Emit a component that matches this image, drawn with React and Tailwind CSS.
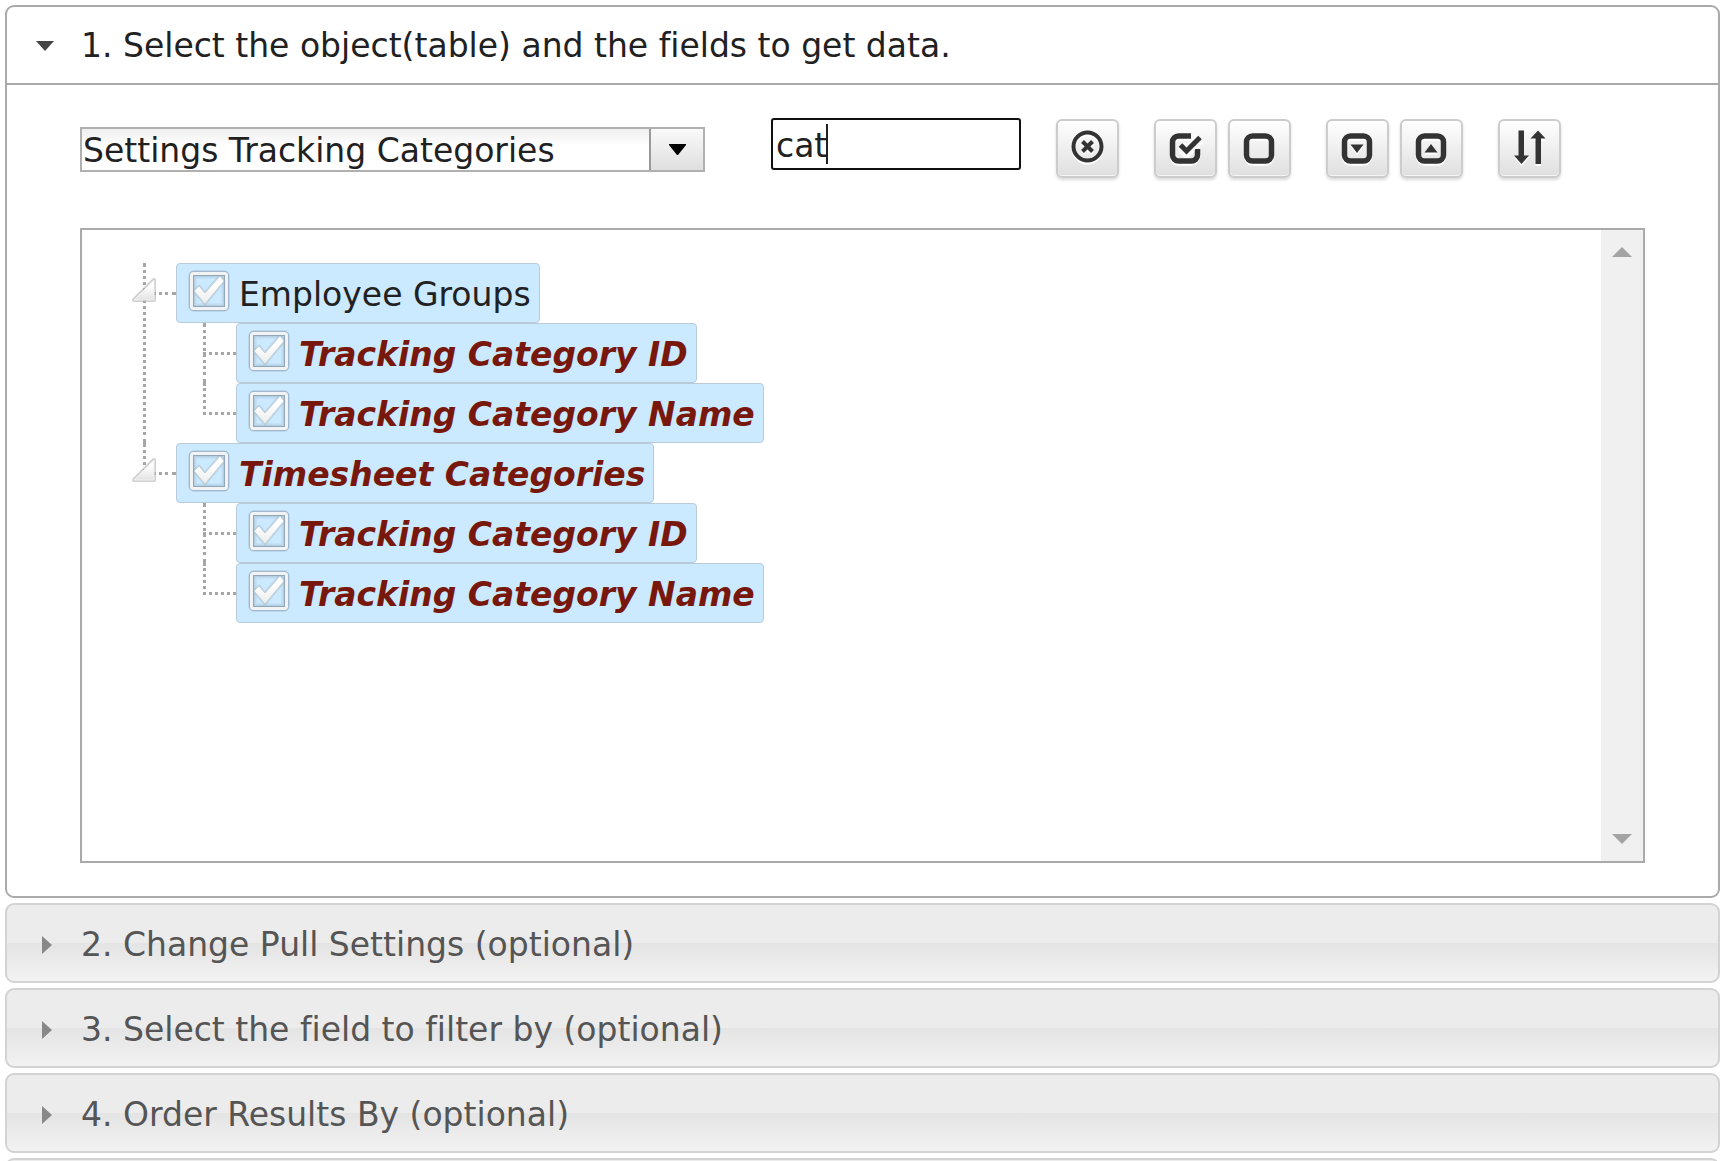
import React, { useState } from 'react';

const TREE = [
  {
    name: 'Employee Groups',
    match: false,
    children: ['Tracking Category ID', 'Tracking Category Name'],
  },
  {
    name: 'Timesheet Categories',
    match: true,
    children: ['Tracking Category ID', 'Tracking Category Name'],
  },
];

const SECTIONS = [
  '2. Change Pull Settings (optional)',
  '3. Select the field to filter by (optional)',
  '4. Order Results By (optional)',
];

const ToolButton = ({ title, children }) => (
  <button
    type="button"
    title={title}
    aria-label={title}
    className="flex h-[59px] w-[63px] shrink-0 items-center justify-center rounded-md border-2 border-[#cccccc] bg-linear-to-b from-white to-[#dfdfdf] pb-[2px] shadow-[inset_0_-1px_0_#f6f6f6,0_2px_3px_#00000026]"
  >
    <svg width="36" height="36" viewBox="0 0 36 36" aria-hidden="true" className="overflow-visible drop-shadow-[0_2px_0_#ffffff]">
      {children}
    </svg>
  </button>
);

const TreeCheckbox = () => (
  <svg width="44" height="44" viewBox="0 0 44 44" aria-hidden="true" className="pointer-events-none absolute inset-0">
    <defs>
      <linearGradient id="tick" x1="0" y1="0" x2="0" y2="1">
        <stop offset="0.3" stopColor="#ffffff" />
        <stop offset="1" stopColor="#ececec" />
      </linearGradient>
    </defs>
    <rect x="4.5" y="4.5" width="35" height="35" rx="3" fill="none" stroke="#8ea3b2" strokeWidth="7" opacity="0.25" />
    <rect x="4.5" y="4.5" width="35" height="35" rx="2" fill="none" stroke="#8ea3b2" strokeWidth="5" opacity="0.6" />
    <rect x="4.5" y="4.5" width="35" height="35" rx="2" fill="none" stroke="#f1f3f5" strokeWidth="3" />
    <rect x="8" y="8" width="28" height="28" fill="none" stroke="#9bb3c4" strokeWidth="3" opacity="0.25" />
    <rect x="6.5" y="6.5" width="31" height="31" fill="none" stroke="#92a8b7" strokeWidth="1" />
    <path d="M7 22l5-5 6 7L33 7l4 5-19 23z" fill="none" stroke="#93abbb" strokeWidth="3" opacity="0.3" strokeLinejoin="round" />
    <path d="M7 22l5-5 6 7L33 7l4 5-19 23z" fill="url(#tick)" stroke="#c3ced6" strokeWidth="1" strokeLinejoin="round" />
  </svg>
);

const TreeNode = ({ id, name, match }) => (
  <label
    htmlFor={id}
    className="flex h-[60px] w-fit items-center rounded-sm border border-[#b9cbd8] bg-[#cbe9ff] pr-2 pl-[10px]"
  >
    <span className="relative mr-2 mb-1 h-11 w-11 shrink-0">
      <input id={id} type="checkbox" defaultChecked className="h-11 w-11 opacity-0" />
      <TreeCheckbox />
    </span>
    <span className={match ? 'pt-1 font-bold text-[#78180c] italic' : 'pt-1'}>{name}</span>
  </label>
);

export default function App() {
  const [query, setQuery] = useState('cat');

  return (
    <div className="flex h-screen flex-col gap-[5px] overflow-hidden bg-white pt-[5px] pr-[9px] pl-[5px] font-['DejaVu_Sans',Verdana,sans-serif] text-[33px] leading-10 whitespace-nowrap text-[#212121] [font-variant-ligatures:none]">
      <section className="shrink-0 rounded-[9px] border-2 border-[#aaaaaa]">
        <button type="button" className="flex h-[78px] w-full items-center border-b-2 border-[#aaaaaa] pt-[2px] pl-[28px] text-left">
          <svg width="20" height="12" viewBox="0 0 20 12" aria-hidden="true" className="mr-[26px]">
            <path d="M1 1h18l-9 10z" fill="#454545" />
          </svg>
          1. Select the object(table) and the fields to get data.
        </button>

        <div className="px-[73px] pt-[33px] pb-[33px]">
          {/* Toolbar */}
          <div className="flex h-[60px] items-start">
            <div className="relative mt-[9px] w-[625px]">
              <select
                aria-label="Object"
                className="block h-[45px] w-full appearance-none border-2 border-[#b0b0b0] bg-linear-to-b from-[#eeeeee] to-white to-40% pt-[2px] pl-px outline-none"
              >
                <option>Settings Tracking Categories</option>
              </select>
              <span className="pointer-events-none absolute inset-y-[2px] right-[2px] flex w-[54px] items-center justify-center border-l-2 border-[#999999] bg-linear-to-b from-[#fafafa] to-[#dfdfdf]">
                <svg width="17" height="12" viewBox="0 0 17 12" aria-hidden="true">
                  <path d="M0 0h17v1l-8 10h-1L0 1z" fill="#000000" />
                </svg>
              </span>
            </div>

            <div className="relative ml-[66px]">
              <input
                type="text"
                aria-label="Search fields"
                value={query}
                onChange={(e) => setQuery(e.target.value)}
                className="block h-[52px] w-[250px] rounded-[3px] border-2 border-[#101010] pt-[2px] pl-[3px] outline-none"
              />
              <span className="pointer-events-none absolute top-[6px] left-[55px] h-10 w-[2px] bg-[#212121]" />
            </div>

            <div className="ml-[35px] flex gap-[35px] pt-px">
              <ToolButton title="Clear search">
                <circle cx="17.5" cy="16.5" r="14" fill="none" stroke="#333333" strokeWidth="4" />
                <path d="M12.5 11.5l10 10M22.500 11.5l-10 10" stroke="#333333" strokeWidth="4" />
              </ToolButton>

              <div className="flex gap-[11px]">
                <ToolButton title="Check all">
                  <path d="M23 6H10.5a6 6 0 0 0-6 6v13a6 6 0 0 0 6 6h13a6 6 0 0 0 6-6v-6" fill="none" stroke="#333333" strokeWidth="5.5" />
                  <path d="M13 15.5l5.5 5.5L32 7.5" fill="none" stroke="#fafafa" strokeWidth="10" />
                  <path d="M12.5 15l6 6L32 7.5" fill="none" stroke="#333333" strokeWidth="5" />
                </ToolButton>
                <ToolButton title="Uncheck all">
                  <rect x="4.5" y="6" width="25" height="25" rx="6" fill="none" stroke="#333333" strokeWidth="5.5" />
                </ToolButton>
              </div>

              <div className="flex gap-[11px]">
                <ToolButton title="Expand all">
                  <rect x="4.5" y="6" width="25" height="25" rx="6" fill="none" stroke="#333333" strokeWidth="5.5" />
                  <path d="M10.5 14.5h13L17 23z" fill="#333333" />
                </ToolButton>
                <ToolButton title="Collapse all">
                  <rect x="4.5" y="6" width="25" height="25" rx="6" fill="none" stroke="#333333" strokeWidth="5.5" />
                  <path d="M10.5 22.5h13L17 14z" fill="#333333" />
                </ToolButton>
              </div>

              <ToolButton title="Sort">
                <path d="M6.5.5H12v25h5L9.5 34 2 25.5h4.5zM23.5 34H29V8.5h4.5L26 .5l-7.5 8h5z" fill="#333333" />
              </ToolButton>
            </div>
          </div>

          {/* Field tree */}
          <div className="mt-[50px] flex h-[635px] border-2 border-[#aaaaaa]">
            <ul className="flex-1 pt-[33px] pl-[48px]">
              {TREE.map((node, i) => (
                <li key={node.name} className="flex">
                  <div className="relative w-[46px] shrink-0">
                    <span
                      className={
                        i < TREE.length - 1
                          ? 'absolute top-0 left-[13px] h-full border-l-3 border-dotted border-[#a6a6a6]'
                          : 'absolute top-0 left-[13px] h-[30px] border-l-3 border-dotted border-[#a6a6a6]'
                      }
                    />
                    <span className="absolute top-[29px] right-0 w-6 border-t-3 border-dotted border-[#a6a6a6]" />
                    <svg width="26" height="26" viewBox="0 0 26 26" aria-hidden="true" className="absolute top-[14px] left-px">
                      <defs>
                        <linearGradient id="arrow" x1="0" y1="0" x2="0" y2="1">
                          <stop offset="0.3" stopColor="#ffffff" />
                          <stop offset="1" stopColor="#e2e2e2" />
                        </linearGradient>
                      </defs>
                      <path d="M23 3v20H3z" fill="none" stroke="#b0b0b0" strokeWidth="4" strokeLinejoin="round" opacity="0.6" />
                      <path d="M23 3v20H3z" fill="url(#arrow)" stroke="#f0f0f0" strokeWidth="1" strokeLinejoin="round" />
                    </svg>
                  </div>
                  <div>
                    <TreeNode id={`node-${i}`} name={node.name} match={node.match} />
                    <ul>
                      {node.children.map((child, j) => (
                        <li key={child} className="flex">
                          <div className="relative w-[60px] shrink-0">
                            <span
                              className={
                                j < node.children.length - 1
                                  ? 'absolute top-0 left-[27px] h-full border-l-3 border-dotted border-[#a6a6a6]'
                                  : 'absolute top-0 left-[27px] h-8 border-l-3 border-dotted border-[#a6a6a6]'
                              }
                            />
                            <span className="absolute top-[29px] right-0 w-[33px] border-t-3 border-dotted border-[#a6a6a6]" />
                          </div>
                          <TreeNode id={`node-${i}-${j}`} name={child} match />
                        </li>
                      ))}
                    </ul>
                  </div>
                </li>
              ))}
            </ul>

            {/* Scrollbar */}
            <div className="flex w-[42px] flex-col items-center justify-between bg-[#f0f0f0] py-[17px]">
              <svg width="20" height="10" viewBox="0 0 20 10" aria-hidden="true">
                <path d="M10 0l10 10H0z" fill="#a3a3a3" />
              </svg>
              <svg width="20" height="10" viewBox="0 0 20 10" aria-hidden="true">
                <path d="M0 0h20L10 10z" fill="#a3a3a3" />
              </svg>
            </div>
          </div>
        </div>
      </section>

      {SECTIONS.map((title) => (
        <button
          key={title}
          type="button"
          className="flex h-20 w-full shrink-0 items-center rounded-[9px] border-2 border-[#d3d3d3] bg-[linear-gradient(#ececec_50%,#e4e4e4_50%,#f2f2f2)] pt-[3px] pl-[34px] text-left text-[#555555]"
        >
          <svg width="12" height="20" viewBox="0 0 12 20" aria-hidden="true" className="mr-[28px]">
            <path d="M1 1v18l10-9z" fill="#888888" />
          </svg>
          {title}
        </button>
      ))}

      {/* Top edge of the next collapsed section */}
      <div className="min-h-0 flex-1 overflow-hidden">
        <div className="h-20 rounded-[9px] border-2 border-[#d3d3d3] bg-[#ececec]" />
      </div>
    </div>
  );
}
